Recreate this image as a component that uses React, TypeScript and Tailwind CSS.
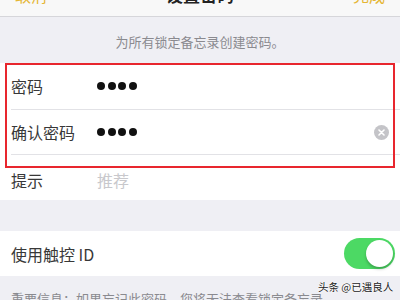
import React from "react";

const font = { fontFamily: '"Noto Sans CJK SC", "Noto Sans", sans-serif' };

function Dots() {
  return (
    <div className="flex items-center gap-[2.5px]">
      {[0, 1, 2, 3].map((i) => (
        <span key={i} className="block w-[8px] h-[8px] rounded-full bg-[#111]" />
      ))}
    </div>
  );
}

export default function App() {
  return (
    <div className="relative w-[400px] h-[300px] overflow-hidden bg-[#efeff4]" style={font}>
      {/* top nav */}
      <div className="h-[17px] overflow-hidden bg-[#f8f8f8] border-b border-[#d6d6da] flex items-end justify-between px-[15px]">
        <span className="text-[16px] leading-[20px] mb-[11px] text-[#e5b634]">取消</span>
        <span className="text-[17px] leading-[20px] mb-[11px] font-bold text-[#222]">设置密码</span>
        <span className="text-[16px] leading-[20px] mb-[11px] text-[#e5b634]">完成</span>
      </div>

      {/* header text */}
      <div className="h-[46px] pt-[17px] flex justify-center">
        <span className="text-[13px] leading-[16px] text-[#8a8a8f]">为所有锁定备忘录创建密码。</span>
      </div>

      {/* password group */}
      <div className="bg-white">
        <div className="h-[47px] pl-[11px] flex">
          <div className="flex-1 flex items-center border-b border-[#e2e2e6]">
            <span className="w-[86px] text-[16px] text-[#383838]">密码</span>
            <Dots />
          </div>
        </div>
        <div className="h-[45px] pl-[11px] flex">
          <div className="flex-1 flex items-center border-b border-[#e2e2e6] pr-[11px]">
            <span className="w-[86px] text-[16px] text-[#383838]">确认密码</span>
            <Dots />
            <div className="ml-auto w-[15px] h-[15px] rounded-full bg-[#c4c4c8] flex items-center justify-center">
              <svg width="7" height="7" viewBox="0 0 7 7">
                <path d="M1 1L6 6M6 1L1 6" stroke="white" strokeWidth="1.6" strokeLinecap="round" />
              </svg>
            </div>
          </div>
        </div>
        <div className="h-[45px] pl-[11px] flex items-center">
          <span className="w-[86px] text-[16px] text-[#383838] mt-[4px]">提示</span>
          <span className="text-[16px] text-[#c8c8cc] mt-[4px]">推荐</span>
        </div>
      </div>

      <div className="h-[31px]" />

      {/* touch id */}
      <div className="h-[45px] bg-white flex items-center justify-between pl-[11px] pr-[5px]">
        <span className="text-[16px] text-[#383838]">使用触控 ID</span>
        <div className="w-[51px] h-[31px] rounded-full bg-[#4cd964] flex items-center justify-end pr-[2px]">
          <div className="w-[27px] h-[27px] rounded-full bg-white shadow-[0_2px_3px_rgba(0,0,0,0.25)]" />
        </div>
      </div>

      <div className="pt-[9px] pl-[11px] whitespace-nowrap">
        <span className="text-[13px] leading-[16px] text-[#8a8a8f]">重要信息：如果忘记此密码，您将无法查看锁定备忘录。</span>
      </div>

      {/* red highlight */}
      <div className="absolute left-[5px] top-[63px] w-[390px] h-[105px] border-2 border-[#e8262e]" />

      {/* watermark */}
      <div
        className="absolute left-[318px] top-[280px] text-[10.5px] leading-[14px] text-[#222] whitespace-nowrap"
        style={{ textShadow: "0 0 2px #fff, 0 0 2px #fff, 0 0 1px #fff" }}
      >
        头条 @已遇良人
      </div>
    </div>
  );
}
